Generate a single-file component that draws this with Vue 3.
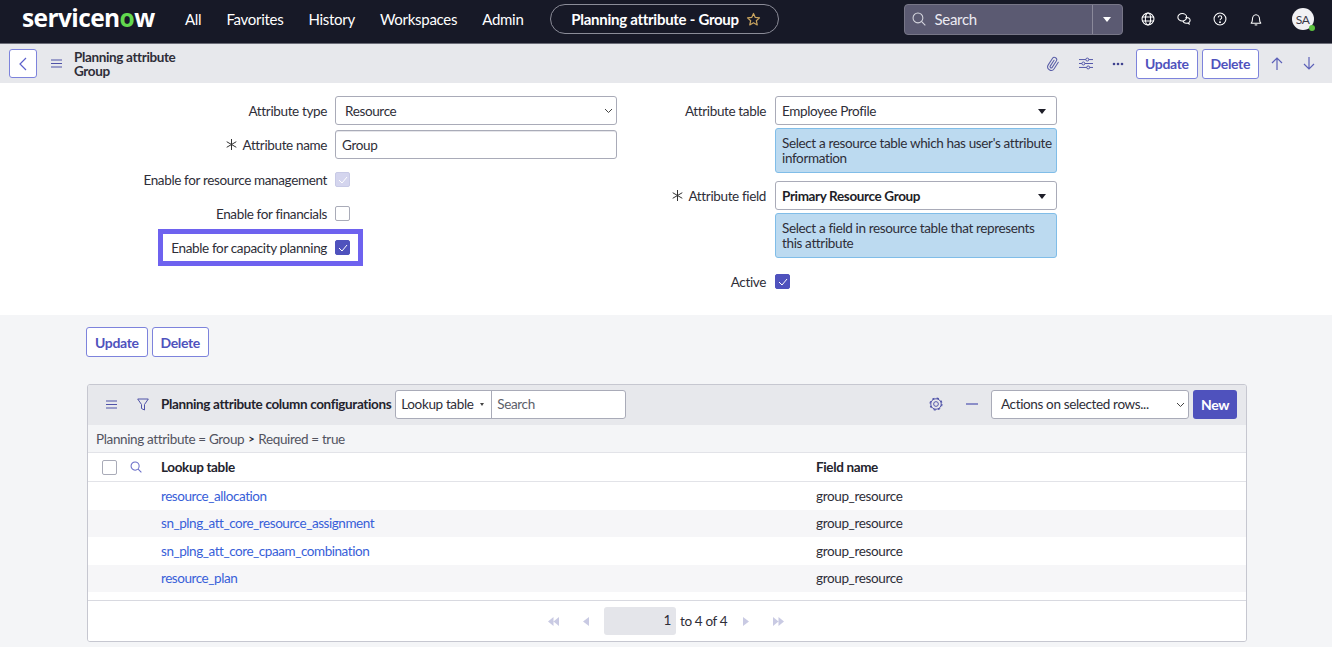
<script setup>
const nav = ['All', 'Favorites', 'History', 'Workspaces', 'Admin']
const rows = [
  { table: 'resource_allocation', field: 'group_resource' },
  { table: 'sn_plng_att_core_resource_assignment', field: 'group_resource' },
  { table: 'sn_plng_att_core_cpaam_combination', field: 'group_resource' },
  { table: 'resource_plan', field: 'group_resource' }
]
</script>

<template>
  <div class="page">
    <header class="topbar">
      <div class="logo">servicen<span class="logo-o">o</span>w</div>
      <nav class="nav">
        <span v-for="item in nav" :key="item">{{ item }}</span>
      </nav>
      <div class="pill">
        <span>Planning attribute - Group</span>
        <svg width="15" height="15" viewBox="0 0 16 16" fill="none" stroke="#c9a45f" stroke-width="1.3"><path d="M8 1.6l1.9 4.2 4.5.5-3.4 3 1 4.5L8 11.5l-4 2.3 1-4.5-3.4-3 4.5-.5z" stroke-linejoin="round"/></svg>
      </div>
      <div class="global-search">
        <div class="gs-main">
          <svg width="14" height="14" viewBox="0 0 16 16" fill="none" stroke="#d5d6de" stroke-width="1.2"><circle cx="6.8" cy="6.8" r="5.6"/><path d="M10.8 10.8l4.4 4.4"/></svg>
          <span>Search</span>
        </div>
        <div class="gs-drop"><i class="caret"></i></div>
      </div>
      <div class="top-icons">
        <svg width="14" height="14" viewBox="0 0 16 16" fill="none" stroke="#fff" stroke-width="1.2"><circle cx="8" cy="8" r="6.8"/><ellipse cx="8" cy="8" rx="3" ry="6.8"/><path d="M1.2 5.8h13.6M1.2 10.2h13.6"/></svg>
        <svg width="14" height="14" viewBox="0 0 16 16" fill="none" stroke="#fff" stroke-width="1.2"><ellipse cx="6" cy="6" rx="5" ry="4.2"/><path d="M9.5 6.5c3-.6 5.5.6 5.5 3 0 1.2-.6 2-1.5 2.6l.4 1.7-2-1.1c-2.5.4-4.6-.7-5-2.5"/></svg>
        <svg width="14" height="14" viewBox="0 0 16 16" fill="none" stroke="#fff" stroke-width="1.2"><circle cx="8" cy="8" r="6.8"/><path d="M6 6.2C6 5 7 4.3 8 4.3s2 .7 2 1.9c0 1.6-2 1.6-2 3.3"/><circle cx="8" cy="11.6" r=".5" fill="#fff"/></svg>
        <svg width="14" height="15" viewBox="0 0 16 16" fill="none" stroke="#fff" stroke-width="1.2"><path d="M2.500 12.200c1-1 1.400-2 1.400-4.200C3.900 5 5.700 2.500 8 2.500S12.100 5 12.100 8c0 2.200.4 3.200 1.400 4.200z" stroke-linejoin="round"/><path d="M6.500 14.200h3"/></svg>
      </div>
      <div class="avatar">SA<i class="presence"></i></div>
    </header>

    <div class="subbar">
      <button class="back">
        <svg width="10" height="14" viewBox="0 0 10 14" fill="none" stroke="#5c60cc" stroke-width="1.2"><path d="M8 1L2 7l6 6"/></svg>
      </button>
      <svg class="burger" width="11" height="9" viewBox="0 0 11 9" stroke="#4f52a8" stroke-width="1.2"><path d="M0 1h11M0 4.500h11M0 8h11"/></svg>
      <div class="record-title">Planning attribute<br>Group</div>
      <div class="sub-actions">
        <svg width="14" height="16" viewBox="0 0 24 24" fill="none" stroke="#5a5ea8" stroke-width="1.800" stroke-linecap="round" stroke-linejoin="round"><path transform="rotate(-12 12 12)" d="M21.440 11.050l-9.190 9.190a6 6 0 0 1-8.490-8.490l9.190-9.190a4 4 0 0 1 5.660 5.660l-9.200 9.190a2 2 0 0 1-2.830-2.830l8.490-8.480"/></svg>
        <svg width="14" height="13" viewBox="0 0 16 14" fill="none" stroke="#4f52a8" stroke-width="1.1"><path d="M0 2.500h16M0 7h16M0 11.500h16"/><circle cx="9.500" cy="2.500" r="1.700" fill="#e7e8ec"/><circle cx="5" cy="7" r="1.700" fill="#e7e8ec"/><circle cx="10.500" cy="11.500" r="1.700" fill="#e7e8ec"/></svg>
        <svg width="12" height="4" viewBox="0 0 12 4" fill="#3f428f"><circle cx="2" cy="2" r="1.300"/><circle cx="6" cy="2" r="1.300"/><circle cx="10" cy="2" r="1.300"/></svg>
      </div>
      <div class="btn-group">
        <button class="btn">Update</button>
        <button class="btn">Delete</button>
      </div>
      <div class="arrows">
        <svg width="12" height="13" viewBox="0 0 12 13" fill="none" stroke="#5c60b8" stroke-width="1.2"><path d="M6 13V1M1 6l5-5 5 5"/></svg>
        <svg width="12" height="13" viewBox="0 0 12 13" fill="none" stroke="#5c60b8" stroke-width="1.2"><path d="M6 0v12M1 7l5 5 5-5"/></svg>
      </div>
    </div>

    <section class="form">
      <div class="col col-left">
        <div class="row">
          <label class="lbl">Attribute type</label>
          <div class="ctrl select native">Resource<svg class="chev" width="9" height="6" viewBox="0 0 9 6" fill="none" stroke="#444" stroke-width="1"><path d="M1 1l3.500 3.500L8 1"/></svg></div>
        </div>
        <div class="row">
          <label class="lbl"><svg class="req" width="11" height="11" viewBox="0 0 11 11" stroke="#333" stroke-width="1"><path d="M5.500 0v11M.7 2.700l9.600 5.600M.7 8.300l9.600-5.600"/></svg>Attribute name</label>
          <div class="ctrl input">Group</div>
        </div>
        <div class="row">
          <label class="lbl">Enable for resource management</label>
          <span class="check disabled"><svg width="10" height="8" viewBox="0 0 10 8" fill="none" stroke="#fff" stroke-width="1"><path d="M1 4l3 3 5-6"/></svg></span>
        </div>
        <div class="row">
          <label class="lbl">Enable for financials</label>
          <span class="check"></span>
        </div>
        <div class="row highlighted">
          <label class="lbl">Enable for capacity planning</label>
          <span class="check on"><svg width="10" height="8" viewBox="0 0 10 8" fill="none" stroke="#fff" stroke-width="1"><path d="M1 4l3 3 5-6"/></svg></span>
        </div>
      </div>
      <div class="col col-right">
        <div class="row">
          <label class="lbl">Attribute table</label>
          <div class="ctrl select">Employee Profile<i class="caret dark"></i></div>
        </div>
        <div class="info">Select a resource table which has user's attribute information</div>
        <div class="row field-row">
          <label class="lbl"><svg class="req" width="11" height="11" viewBox="0 0 11 11" stroke="#333" stroke-width="1"><path d="M5.500 0v11M.7 2.700l9.600 5.600M.7 8.300l9.600-5.600"/></svg>Attribute field</label>
          <div class="ctrl select strong">Primary Resource Group<i class="caret dark"></i></div>
        </div>
        <div class="info">Select a field in resource table that represents this attribute</div>
        <div class="row active-row">
          <label class="lbl">Active</label>
          <span class="check on"><svg width="10" height="8" viewBox="0 0 10 8" fill="none" stroke="#fff" stroke-width="1"><path d="M1 4l3 3 5-6"/></svg></span>
        </div>
      </div>
    </section>

    <section class="lower">
      <div class="btn-group lower-btns">
        <button class="btn">Update</button>
        <button class="btn">Delete</button>
      </div>

      <div class="panel">
        <div class="toolbar">
          <svg class="tb-burger" width="11" height="9" viewBox="0 0 11 9" stroke="#4f52a8" stroke-width="1.2"><path d="M0 1h11M0 4.500h11M0 8h11"/></svg>
          <svg class="tb-filter" width="12" height="13" viewBox="0 0 12 13" fill="none" stroke="#4f52a8" stroke-width="1"><path d="M.7 1h10.600L7.500 6.500V12l-3-1.500v-4z" stroke-linejoin="round"/></svg>
          <span class="tb-title">Planning attribute column configurations</span>
          <div class="search-combo">
            <div class="combo-left">Lookup table<i class="mini-caret"></i></div>
            <div class="combo-right">Search</div>
          </div>
          <div class="tb-right">
            <svg width="14" height="14" viewBox="0 0 16 16" fill="none" stroke="#4f52a8"><circle cx="8" cy="8" r="2.700" stroke-width="1.100"/><circle cx="8" cy="8" r="6" stroke-width="1.100"/><circle cx="8" cy="8" r="6.800" stroke-width="1.300" stroke-dasharray="2.600 2.740"/></svg>
            <span class="dash"></span>
            <div class="ctrl select native actions">Actions on selected rows...<svg class="chev" width="9" height="6" viewBox="0 0 9 6" fill="none" stroke="#444" stroke-width="1"><path d="M1 1l3.500 3.500L8 1"/></svg></div>
            <button class="btn-new">New</button>
          </div>
        </div>
        <div class="crumbs">Planning attribute = Group<b>&gt;</b>Required = true</div>
        <div class="thead">
          <span class="check head-check"></span>
          <svg class="head-search" width="12" height="12" viewBox="0 0 16 16" fill="none" stroke="#6a6ec8" stroke-width="1.4"><circle cx="6.800" cy="6.800" r="5.400"/><path d="M10.800 10.800l4.400 4.400"/></svg>
          <span class="c-table">Lookup table</span>
          <span class="c-field">Field name</span>
        </div>
        <div class="tbody">
          <div v-for="row in rows" :key="row.table" class="trow">
            <a class="c-table link">{{ row.table }}</a>
            <span class="c-field">{{ row.field }}</span>
          </div>
        </div>
        <div class="pager">
          <svg width="11" height="9" viewBox="0 0 11 9" fill="#c9cae3"><path d="M5.500 0v9L0 4.500zM11 0v9L5.500 4.500z"/></svg>
          <svg class="p2" width="6" height="9" viewBox="0 0 6 9" fill="#c9cae3"><path d="M6 0v9L0 4.500z"/></svg>
          <span class="page-box">1</span>
          <span class="page-text">to 4 of 4</span>
          <svg class="p3" width="6" height="9" viewBox="0 0 6 9" fill="#c9cae3"><path d="M0 0v9l6-4.500z"/></svg>
          <svg class="p4" width="11" height="9" viewBox="0 0 11 9" fill="#c9cae3"><path d="M0 0v9l5.500-4.500zM5.500 0v9L11 4.500z"/></svg>
        </div>
      </div>
    </section>
  </div>
</template>

<style>
html, body { margin: 0; background: #f4f5f7; }
</style>

<style scoped>
.page { width: 1332px; height: 647px; overflow: hidden; font-family: Lato, "Liberation Sans", sans-serif; font-size: 13.5px; letter-spacing: -0.36px; color: #2e2e38; background: #f4f5f7; }
button { font-family: inherit; letter-spacing: inherit; }

.topbar { height: 44px; box-sizing: border-box; padding-bottom: 5px; background: #171927; display: flex; align-items: center; color: #fff; border-bottom: 1px solid #6b6d78; }
.logo { width: 133px; margin-left: 22px; font: 700 24.5px/28px "Open Sans", sans-serif; letter-spacing: -0.6px; color: #fff; margin-top: -2px; white-space: nowrap; }
.logo-o { color: #62d84e; }
.nav { display: flex; gap: 25px; margin-left: 30px; font-size: 15px; letter-spacing: -0.28px; }
.pill { margin-left: 26px; width: 229px; height: 30px; box-sizing: border-box; padding-left: 4px; border: 1px solid #8b8c98; border-radius: 15px; display: flex; align-items: center; justify-content: center; gap: 7px; font-size: 15px; letter-spacing: -0.27px; font-weight: 700; }
.global-search { margin-left: 125px; width: 219px; height: 31px; box-sizing: border-box; display: flex; background: #5b5a72; border: 1px solid #777687; border-radius: 4px; }
.gs-main { width: 188px; display: flex; align-items: center; gap: 9px; padding-left: 7px; box-sizing: border-box; border-right: 1px solid #8a899a; font-size: 15px; letter-spacing: -0.3px; color: #eceaf2; }
.gs-drop { flex: 1; display: flex; align-items: center; justify-content: center; }
.caret { width: 0; height: 0; border-left: 4.5px solid transparent; border-right: 4.5px solid transparent; border-top: 5px solid #fff; }
.caret.dark { border-top-color: #1e1e28; position: absolute; right: 10px; top: 12px; }
.top-icons { display: flex; align-items: center; gap: 22px; margin-left: 18px; }
.avatar { position: relative; margin-left: 29px; width: 22px; height: 22px; border-radius: 50%; background: #f1f1f4; color: #3a3a48; font-size: 12px; display: flex; align-items: center; justify-content: center; }
.presence { position: absolute; right: -1px; bottom: -1px; width: 6px; height: 6px; border-radius: 50%; background: #5cc23f; }

.subbar { height: 39px; background: #e7e8ec; display: flex; align-items: center; }
.back { margin-left: 9px; width: 28px; height: 29px; box-sizing: border-box; padding: 0; background: #fff; border: 1px solid #7d83dc; border-radius: 3px; display: flex; align-items: center; justify-content: center; }
.burger { margin-left: 14px; }
.record-title { margin-left: 12px; font-weight: 700; line-height: 14px; color: #2e2e38; }
.sub-actions { margin-left: auto; display: flex; align-items: center; gap: 19px; }
.btn-group { display: flex; gap: 4px; }
.sub-actions + .btn-group { margin-left: 12px; }
.btn { height: 30px; padding: 0 8px; background: #fff; border: 1px solid #7d83dc; border-radius: 3px; color: #4f52bd; font-size: 14px; font-weight: 700; }
.arrows { display: flex; gap: 20px; margin: 0 17px 0 12px; }

.form { height: 232px; box-sizing: border-box; padding-top: 13px; background: #fff; display: flex; }
.col { display: flex; flex-direction: column; }
.col-left { margin-left: 130px; width: 487px; gap: 5px; }
.col-left .row:nth-child(3) { margin-top: 1px; }
.col-right { margin-left: 33px; width: 407px; }
.row { display: flex; align-items: center; min-height: 29px; position: relative; }
.lbl { width: 197px; margin-right: 8px; text-align: right; white-space: nowrap; display: flex; align-items: center; justify-content: flex-end; }
.col-right .lbl { width: 116px; margin-right: 9px; }
.req { margin-right: 6px; }
.ctrl { width: 282px; height: 29px; box-sizing: border-box; border: 1px solid #a9abb8; border-radius: 3px; background: #fff; display: flex; align-items: center; padding-left: 6px; position: relative; }
.input { box-shadow: inset 0 1px 0 #e6e6ea; }
.native { padding-left: 9px; }
.chev { position: absolute; right: 3px; top: 11px; }
.strong { font-weight: 700; color: #1e1e28; }
.check { width: 15px; height: 15px; box-sizing: border-box; border: 1px solid #a9abb8; border-radius: 2px; background: #fff; display: flex; align-items: center; justify-content: center; }
.check.on { background: #4f52bd; border-color: #4f52bd; }
.check.disabled { background: #d4d5ee; border-color: #c8cae6; }
.highlighted::after { content: ""; position: absolute; left: 28px; top: -4px; width: 205px; height: 37px; box-sizing: border-box; border: 5px solid #6e62ef; pointer-events: none; }
.info { margin: 3px 0 0 125px; width: 282px; height: 45px; box-sizing: border-box; padding: 7px 4px 0 6px; background: #bcdaf0; border: 1px solid #80bde8; border-radius: 3px; line-height: 15px; }
.field-row { margin-top: 8px; }
.active-row { margin-top: 9px; }

.lower { padding: 12px 85px 0 86px; }
.lower-btns { height: 30px; }
.panel { margin: 27px 0 0 1px; width: 1160px; height: 258px; box-sizing: border-box; border: 1px solid #c6c7d0; border-radius: 3px; background: #f4f5f7; overflow: hidden; display: flex; flex-direction: column; }
.toolbar { height: 40px; flex: none; box-sizing: border-box; padding: 0 0 2px 18px; background: #e7e8ec; display: flex; align-items: center; }
.tb-filter { margin-left: 20px; }
.tb-title { margin-left: 12px; font-weight: 700; color: #23232d; white-space: nowrap; }
.search-combo { margin-left: 4px; display: flex; width: 231px; height: 29px; box-sizing: border-box; border: 1px solid #a9abb8; border-radius: 3px; background: #fff; }
.combo-left { width: 96px; box-sizing: border-box; padding: 0 7px 0 5px; border-right: 1px solid #a9abb8; display: flex; align-items: center; justify-content: space-between; }
.mini-caret { width: 0; height: 0; border-left: 2.5px solid transparent; border-right: 2.5px solid transparent; border-top: 3px solid #444; }
.combo-right { padding-left: 5px; display: flex; align-items: center; color: #5c5e6a; }
.tb-right { margin-left: auto; display: flex; align-items: center; padding-right: 9px; }
.dash { width: 12px; height: 1.5px; background: #8b8ec8; margin: 0 13px 0 23px; }
.actions { width: 198px; }
.btn-new { margin-left: 4px; width: 44px; height: 29px; background: #4f52bd; color: #fff; border: none; border-radius: 3px; font-size: 14px; font-weight: 700; }
.crumbs { height: 28px; flex: none; display: flex; align-items: center; padding-left: 8px; color: #52535f; letter-spacing: -0.36px; border-bottom: 1px solid #e2e3e8; box-sizing: border-box; }
.crumbs b { margin: 0 4px; font-weight: 700; color: #2e2e38; font-size: 11px; }
.thead { height: 29px; flex: none; box-sizing: border-box; background: #fff; border-bottom: 1px solid #e2e3e8; display: flex; align-items: center; position: relative; }
.head-check { margin-left: 14px; }
.head-search { margin-left: 13px; }
.thead .c-table { margin-left: 19px; font-weight: 700; color: #23232d; }
.thead .c-field { position: absolute; left: 728px; font-weight: 700; color: #23232d; }
.tbody { background: #fff; height: 119px; flex: none; border-bottom: 1px solid #d8d9e0; box-sizing: border-box; }
.trow { height: 27.5px; display: flex; align-items: center; position: relative; }
.trow:nth-child(even) { background: #f6f6f8; }
.link { margin-left: 73px; color: #3860d8; letter-spacing: -0.45px; }
.trow .c-field { position: absolute; left: 728px; color: #2e2e38; }
.pager { flex: 1; background: #fff; display: flex; align-items: center; padding-left: 460px; }
.p2 { margin-left: 24px; }
.page-box { margin-left: 15px; width: 72px; height: 28px; box-sizing: border-box; background: #e4e5ea; border-radius: 3px; text-align: right; padding: 5px 5px 0 0; }
.page-text { margin-left: 4px; width: 47px; white-space: nowrap; }
.p3 { margin-left: 16px; }
.p4 { margin-left: 24px; }
</style>
